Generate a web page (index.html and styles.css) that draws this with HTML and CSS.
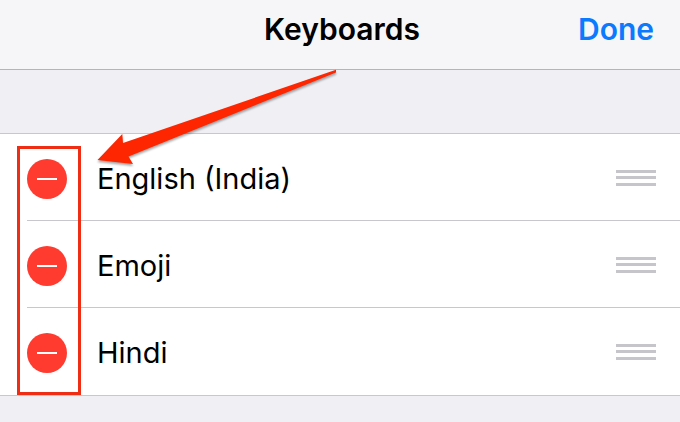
FILE: index.html
```html
<!DOCTYPE html>
<html lang="en">
<head>
<meta charset="utf-8">
<meta name="viewport" content="width=device-width, initial-scale=1">
<title>Keyboards</title>
<link rel="stylesheet" href="styles.css">
</head>
<body>
<header class="navbar">
  <h1 class="title">Keyboards</h1>
  <button class="done" type="button">Done</button>
</header>
<main class="content">
  <ul class="list">
    <li class="row">
      <button class="remove" type="button" aria-label="Remove English (India)"></button>
      <div class="cell"><span class="name">English (India)</span><button class="grip" type="button" aria-label="Reorder English (India)"></button></div>
    </li>
    <li class="row">
      <button class="remove" type="button" aria-label="Remove Emoji"></button>
      <div class="cell"><span class="name">Emoji</span><button class="grip" type="button" aria-label="Reorder Emoji"></button></div>
    </li>
    <li class="row">
      <button class="remove" type="button" aria-label="Remove Hindi"></button>
      <div class="cell"><span class="name">Hindi</span><button class="grip" type="button" aria-label="Reorder Hindi"></button></div>
    </li>
  </ul>
  <div class="highlight"></div>
</main>
<svg class="arrow" width="360" height="180" viewBox="0 0 360 180" aria-hidden="true">
  <path d="M336 69.8 L336 72.6 L128.5 156.5 L133 164 L97.5 160 L122.3 134 L123 143 Z"/>
</svg>
</body>
</html>
```

FILE: styles.css
```css
* { box-sizing: border-box; }
body {
  margin: 0;
  min-height: 100vh;
  position: relative;
  background: #efeff4;
  color: #000;
  font-family: Inter, "Liberation Sans", sans-serif;
}
button {
  border: 0;
  padding: 0;
  background: none;
  font: inherit;
}
.navbar {
  display: grid;
  grid-template-columns: 1fr auto 1fr;
  align-items: center;
  height: 70px;
  padding: 0 26px 12px 30px;
  background: #f6f6f8;
  border-bottom: 1px solid #b5b5b8;
}
.title {
  grid-column: 2;
  margin: 0;
  font-size: 30px;
  font-weight: 600;
}
.done {
  justify-self: end;
  color: #0a7aff;
  font-size: 30px;
  font-weight: 600;
}
.content {
  position: relative;
  margin-top: 63px;
}
.list {
  margin: 0;
  padding: 0;
  list-style: none;
  background: #fff;
  border-top: 1px solid #c8c7cc;
  border-bottom: 1px solid #c8c7cc;
}
.row {
  display: flex;
  height: 87px;
  margin-left: 27px;
  align-items: center;
  border-bottom: 1px solid #c8c7cc;
}
.row:last-child {
  border-bottom-color: transparent;
}
.remove {
  flex: none;
  width: 40px;
  height: 40px;
  margin-top: 4px;
  border-radius: 50%;
  background: linear-gradient(#fff, #fff) center / 20px 2px no-repeat #ff3b30;
}
.cell {
  display: flex;
  flex: 1;
  align-items: center;
  justify-content: space-between;
  margin-top: 2px;
  margin-left: 30px;
  padding-right: 24px;
}
.name { font-size: 29px; }
.grip {
  width: 40px;
  height: 16px;
  background: linear-gradient(#c5c5ca 0 3px, transparent 3px 6px, #c5c5ca 6px 9px, transparent 9px 13px, #c5c5ca 13px);
}
.highlight {
  position: absolute;
  top: 13px;
  left: 17px;
  width: 64px;
  height: 249px;
  border: 3px solid #ee2d14;
  pointer-events: none;
}
.arrow {
  position: absolute;
  top: 0;
  left: 0;
  pointer-events: none;
  fill: #fd2600;
  filter: drop-shadow(0 2px 1px rgba(0, 0, 0, .35));
}
```
